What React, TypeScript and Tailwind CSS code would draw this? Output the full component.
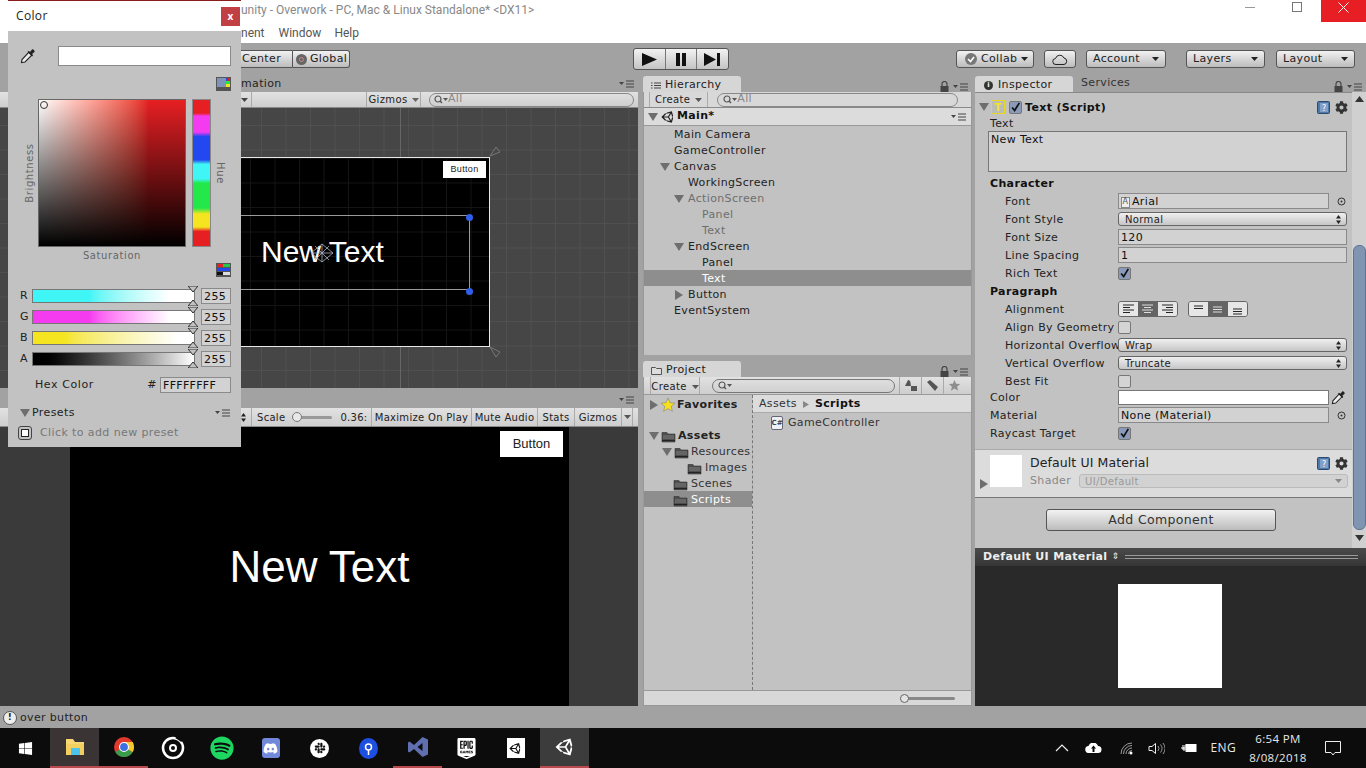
import type { ReactNode } from "react";
import { FaDiscord, FaSlack, FaSpotify, FaUnity, FaWindows, FaCog } from "react-icons/fa";
import { SiEpicgames } from "react-icons/si";

const Tri = ({ dir = "down", className = "" }: { dir?: "down" | "right"; className?: string }) => (
  <svg width="10" height="10" viewBox="0 0 10 10" className={className}>
    <path d={dir === "down" ? "M0 1h10L5 9z" : "M1 0v10l8-5z"} fill="#6e6e6e" />
  </svg>
);

const Arrow = ({ color = "#222" }: { color?: string }) => (
  <svg width="7" height="4" viewBox="0 0 7 4" className="shrink-0">
    <path d="M0 0h7L3.5 4z" fill={color} />
  </svg>
);

const UpDown = () => (
  <svg width="5" height="9" viewBox="0 0 5 9" className="shrink-0">
    <path d="M2.5 0L5 3.5H0zM2.5 9L0 5.5h5z" fill="#222" />
  </svg>
);

const PaneMenu = () => (
  <svg width="16" height="8" viewBox="0 0 16 8">
    <path d="M0 2h5L2.5 5z" fill="#444" />
    <path d="M7 1h8M7 4h8M7 7h8" stroke="#444" strokeWidth="1.2" />
  </svg>
);

const Lock = () => (
  <svg width="9" height="11" viewBox="0 0 9 11">
    <path d="M2 5V3a2.5 2.5 0 015 0v2" fill="none" stroke="#444" strokeWidth="1.2" />
    <rect x="0.5" y="5" width="8" height="6" fill="#444" />
  </svg>
);

const Search = () => (
  <svg width="14" height="9" viewBox="0 0 14 9" className="shrink-0">
    <circle cx="4" cy="4" r="3" fill="none" stroke="#555" strokeWidth="1.2" />
    <path d="M6 6l2 2" stroke="#555" strokeWidth="1.4" />
    <path d="M9 3h5l-2.5 3z" fill="#555" />
  </svg>
);

const Folder = () => (
  <svg width="15" height="13" viewBox="0 0 15 13" className="shrink-0">
    <path d="M1 2.5h5l1 1.500h7v8H1z" fill="#4d4d4d" stroke="#333" strokeWidth="0.6" />
    <path d="M2 6h11M2 8h11" stroke="#8b8b8b" strokeWidth="0.8" />
    <path d="M1 10.500h13" stroke="#222" strokeWidth="1" />
  </svg>
);

const Check = ({ on = true }: { on?: boolean }) => (
  <span className={`flex h-[13px] w-[13px] items-center justify-center rounded-[2px] border border-[#777] ${on ? "bg-[#8a9ab8]" : "bg-[#d4d4d4]"}`}>
    {on && (
      <svg width="13" height="13" viewBox="0 0 13 13">
        <path d="M2.5 6.5l3 3.5 5.5-9" fill="none" stroke="#111" strokeWidth="2" />
      </svg>
    )}
  </span>
);

const HelpBook = () => (
  <svg width="13" height="13" viewBox="0 0 13 13">
    <rect x="0.5" y="0.5" width="12" height="12" rx="1" fill="#4f78a8" stroke="#2c4a70" />
    <rect x="3" y="2" width="8" height="9" fill="#7fa0c8" />
    <text x="5" y="10" fontSize="8" fill="#fff" fontFamily="DejaVu Sans">?</text>
  </svg>
);

const Circle = () => (
  <svg width="9" height="9" viewBox="0 0 9 9">
    <circle cx="4.5" cy="4.5" r="3.5" fill="none" stroke="#333" />
    <circle cx="4.5" cy="4.5" r="1" fill="#333" />
  </svg>
);

const Pipette = ({ size = 16 }: { size?: number }) => (
  <svg width={size} height={size} viewBox="0 0 16 16">
    <path d="M1.5 14.5l.5-3 7-7.500 3 3-7 7z" fill="#eee" stroke="#222" strokeWidth="1.1" />
    <path d="M8.500 3l1.500 1 2-2.500c1-.8 3.300 1.500 2.500 2.500L12 6l1 1.500-1 1-4.500-4.500z" fill="#222" />
  </svg>
);

const Handle = ({ pos, up = false }: { pos: string; up?: boolean }) => (
  <svg width="10" height="6" viewBox="0 0 10 6" className={`absolute right-[-4px] ${pos}`}>
    <path d={up ? "M0 6h10L5 0z" : "M0 0h10L5 6z"} fill="#c2c2c2" stroke="#333" />
  </svg>
);

const Swatches = () => (
  <svg width="15" height="14" viewBox="0 0 15 14">
    <rect width="15" height="14" fill="#555" />
    <rect x="1" y="1" width="9" height="9" fill="#7d93b8" />
    <rect x="10" y="1" width="2" height="3" fill="#2348f0" />
    <rect x="12" y="1" width="2" height="3" fill="#e61f23" />
    <rect x="10" y="4" width="4" height="3" fill="#22e84a" />
    <rect x="10" y="7" width="4" height="3" fill="#f5e520" />
  </svg>
);

const Sliders = () => (
  <svg width="15" height="14" viewBox="0 0 15 14">
    <rect width="15" height="14" fill="#555" />
    <rect x="1" y="1" width="6" height="3" fill="#e61f23" />
    <rect x="7" y="1" width="7" height="3" fill="#22c84a" />
    <rect x="1" y="5" width="13" height="3" fill="#2348f0" />
    <rect x="1" y="9" width="13" height="3" fill="#ddd" />
    <rect x="1" y="9" width="6" height="3" fill="#111" />
  </svg>
);

const toolButton =
  "flex h-[18px] items-center rounded-[3px] border border-[#555] bg-linear-to-b from-[#f2f2f2] to-[#bcbcbc] text-[#222]";
const stripBar = "border-b border-[#8a8a8a] bg-linear-to-b from-[#e2e2e2] to-[#cecece]";
const field = "flex h-[16px] items-center border border-[#8a8a8a] bg-[#d2d2d2] px-[2px] pt-[2px] text-[#111]";
const dropdown =
  "flex h-[14px] w-[229px] items-center justify-between rounded-[3px] border border-[#666] bg-linear-to-b from-[#f0f0f0] to-[#c6c6c6] pl-[6px] pr-[5px] text-[10px] text-[#222]";

const hierarchy = [
  { name: "Main Camera", pad: "pl-[30px]" },
  { name: "GameController", pad: "pl-[30px]" },
  { name: "Canvas", pad: "pl-[30px]", fold: "down" },
  { name: "WorkingScreen", pad: "pl-[44px]" },
  { name: "ActionScreen", pad: "pl-[44px]", fold: "down", dim: true },
  { name: "Panel", pad: "pl-[58px]", dim: true },
  { name: "Text", pad: "pl-[58px]", dim: true },
  { name: "EndScreen", pad: "pl-[44px]", fold: "down" },
  { name: "Panel", pad: "pl-[58px]" },
  { name: "Text", pad: "pl-[58px]", selected: true },
  { name: "Button", pad: "pl-[44px]", fold: "right" },
  { name: "EventSystem", pad: "pl-[30px]" },
];

const colorSliders = [
  { label: "R", bar: "from-[#40f5f5] from-[35%] to-[#fff] to-[85%]" },
  { label: "G", bar: "from-[#f53bf0] from-[35%] to-[#fff] to-[85%]" },
  { label: "B", bar: "from-[#f5e520] from-[20%] to-[#fff] to-[90%]" },
  { label: "A", bar: "from-[#000] to-[#fff]" },
];

const Row = ({ label, sub = true, children }: { label: string; sub?: boolean; children?: ReactNode }) => (
  <div className={`flex h-[18px] items-center text-[#222] ${sub ? "pl-[30px]" : "pl-[15px]"}`}>
    <span className={`whitespace-nowrap pt-[2px] ${sub ? "w-[113px]" : "w-[128px]"}`}>{label}</span>
    {children}
  </div>
);

const AlignIcon = ({ lines }: { lines: string }) => (
  <svg width="13" height="10" viewBox="0 0 13 10">
    <path d={lines} stroke="#222" strokeWidth="1" />
  </svg>
);

function ColorWindow() {
  return (
    <div className="absolute left-[8px] top-0 z-10 flex h-[447px] w-[233px] flex-col bg-[#c2c2c2] text-[#222]">
      <div className="flex h-[31px] shrink-0 items-center justify-between border-t border-[#8c1c1c] bg-white pl-[8px] pr-[1px] text-[12px] [font-family:'Open_Sans',sans-serif]">
        <span>Color</span>
        <span className="flex h-[19px] w-[19px] items-center justify-center bg-[#c04044] text-[10px] font-bold text-white">x</span>
      </div>
      <div className="mt-[15px] flex h-[20px] items-center pl-[12px] pr-[10px]">
        <Pipette />
        <div className="ml-[22px] h-[20px] flex-1 border border-[#8a8a8a] bg-white" />
      </div>
      <div className="mt-[11px] flex h-[14px] justify-end pr-[10px]">
        <Swatches />
      </div>
      <div className="relative mt-[8px] ml-[30px] flex h-[148px]">
        <div className="relative h-[148px] w-[148px] border border-[#666] bg-linear-to-r from-white to-[#e61f23] to-[75%]">
          <div className="absolute inset-0 bg-linear-to-b from-transparent to-black" />
          <div className="absolute left-[1px] top-[1px] h-[8px] w-[8px] rounded-full border border-[#333]" />
        </div>
        <div className="ml-[6px] h-[148px] w-[19px] border border-[#888] bg-[linear-gradient(to_bottom,#e61f23_0_9%,#f53bf0_11%_22%,#2348f0_25%_41%,#40f5f5_44%_54%,#22e84a_57%_74%,#f5e520_78%_87%,#e61f23_90%)]" />
        <span className="absolute left-[-38px] top-[74px] origin-center -translate-y-1/2 -rotate-90 text-[10px] tracking-[0.6px] text-[#666]">Brightness</span>
        <span className="absolute left-[172px] top-[74px] origin-center -translate-y-1/2 rotate-90 text-[10px] tracking-[0.6px] text-[#666]">Hue</span>
      </div>
      <div className="mt-[1px] flex h-[14px] items-center pl-[30px] pr-[10px]">
        <span className="w-[148px] text-center text-[10px] tracking-[0.6px] text-[#666]">Saturation</span>
        <span className="ml-auto mt-[30px]">
          <Sliders />
        </span>
      </div>
      <div className="mt-[26px] flex flex-col gap-[5px] pl-[12px] pr-[10px]">
        {colorSliders.map((s, i) => (
          <div key={s.label} className="flex h-[16px] items-center">
            <span className="w-[12px] text-[11px]">{s.label}</span>
            <div className={`relative h-[14px] flex-1 border border-[#777] bg-linear-to-r ${s.bar}`}>
              <Handle pos="top-[-4px]" />
              {i < 3 ? <Handle pos="bottom-[-4px]" up /> : <Handle pos="bottom-[-3px]" up />}
            </div>
            <span className={`${field} ml-[6px] w-[30px] text-[11px] tracking-[0.4px]`}>255</span>
          </div>
        ))}
      </div>
      <div className="mt-[9px] flex h-[18px] items-center pl-[27px] pr-[10px] text-[11px] tracking-[0.6px]">
        <span>Hex Color</span>
        <span className="ml-auto mr-[3px] text-[#222]">#</span>
        <span className={`${field} w-[71px] tracking-[0.3px]`}>FFFFFFFF</span>
      </div>
      <div className="mt-[11px] flex h-[16px] items-center pl-[12px] pr-[10px] tracking-[0.4px]">
        <Tri />
        <span className="ml-[2px]">Presets</span>
        <span className="ml-auto">
          <PaneMenu />
        </span>
      </div>
      <div className="mt-[4px] flex h-[16px] items-center pl-[10px] tracking-[0.4px] text-[#777]">
        <span className="flex h-[14px] w-[14px] items-center justify-center rounded-[3px] border border-[#444]">
          <span className="h-[8px] w-[8px] border border-[#222] bg-white" />
        </span>
        <span className="ml-[8px]">Click to add new preset</span>
      </div>
    </div>
  );
}

function SceneView() {
  return (
    <div className="relative h-[280px] overflow-hidden bg-[#464646] bg-[linear-gradient(#505050_1px,transparent_1px),linear-gradient(90deg,#505050_1px,transparent_1px)] [background-size:24.5px_24.5px] [background-position:16px_17px]">
      <div className="absolute bottom-0 left-[400px] top-0 w-px bg-[#666]" />
      <div className="absolute left-[200px] top-[49px] h-[190px] w-[290px] border border-[#e8e8e8] bg-black bg-[linear-gradient(#141414_1px,transparent_1px),linear-gradient(90deg,#141414_1px,transparent_1px)] [background-size:24.5px_24.5px]">
        <div className="absolute left-[242px] top-[3px] flex h-[17px] w-[43px] items-center justify-center bg-white text-[9px] text-[#222] [font-family:'Liberation_Sans',sans-serif]">
          Button
        </div>
        <div className="absolute left-0 top-[57px] h-[75px] w-[269px] border border-[#9a9a9a]" />
        <span className="absolute left-[60px] top-[74px] whitespace-nowrap text-[30px] leading-[40px] tracking-normal text-white [font-family:'Liberation_Sans',sans-serif]">New Text</span>
        <svg width="28" height="24" viewBox="0 0 28 24" className="absolute left-[107px] top-[83px]">
          <path d="M3 12L14 3l11 9-11 9zM14 3v18M3 12h22M7 5l14 14M21 5L7 19" fill="none" stroke="#a8b0c0" strokeWidth="0.8" />
        </svg>
        <span className="absolute left-[265px] top-[56px] h-[7px] w-[7px] rounded-full bg-[#2f5fe8]" />
        <span className="absolute left-[265px] top-[130px] h-[7px] w-[7px] rounded-full bg-[#2f5fe8]" />
      </div>
      <svg width="12" height="12" viewBox="0 0 12 12" className="absolute left-[489px] top-[38px]">
        <path d="M1 10L7 1l4 5z" fill="none" stroke="#777" />
      </svg>
      <svg width="12" height="12" viewBox="0 0 12 12" className="absolute left-[489px] top-[238px]">
        <path d="M1 1l6 10 4-5z" fill="none" stroke="#777" />
      </svg>
    </div>
  );
}

function GameView() {
  return (
    <div className="flex h-[279px] bg-[#3a3a3a]">
      <div className="w-[70px]" />
      <div className="relative flex flex-1 items-center justify-center bg-black">
        <span className="text-[44px] tracking-normal text-white [font-family:'Liberation_Sans',sans-serif]">New Text</span>
        <div className="absolute right-[6px] top-[4px] flex h-[26px] w-[63px] items-center justify-center bg-white text-[13px] tracking-normal text-[#222] [font-family:'Liberation_Sans',sans-serif]">
          Button
        </div>
      </div>
      <div className="w-[69px]" />
    </div>
  );
}

function Hierarchy() {
  return (
    <div className="flex h-[263px] flex-col">
      <div className="flex h-[16px] items-center border-x border-b border-[#999] border-b-[#8a8a8a] bg-[#d8d8d8] pl-[5px] pr-[13px]">
        <span className="flex items-center gap-[5px] border-x border-[#aaa] px-[5px] text-[10px] text-[#222]">
          Create <Arrow color="#555" />
        </span>
        <span className="ml-[9px] flex h-[14px] flex-1 items-center rounded-full border border-[#888] pl-[5px] text-[11px] text-[#888]">
          <Search />
          All
        </span>
      </div>
      <div className="flex h-[18px] items-center border-x border-b border-[#999] bg-[#dcdcdc] pl-[4px] pr-[4px] font-bold text-[#111]">
        <Tri />
        <FaUnity className="ml-[3px] mr-[2px] text-[14px] text-[#222]" />
        Main*
        <span className="ml-auto">
          <PaneMenu />
        </span>
      </div>
      <div className="flex-1 border-x border-[#999] bg-[#c2c2c2]">
        {hierarchy.map((r, i) => (
          <div
            key={i}
            className={`flex h-[16px] items-center pt-[2px] ${r.pad} ${r.selected ? "bg-[#8e8e8e] text-white" : r.dim ? "text-[#6e6e6e]" : "text-[#222]"}`}
          >
            {r.fold && (
              <span className="-ml-[14px] mr-[4px] flex w-[10px]">
                <Tri dir={r.fold as "down" | "right"} />
              </span>
            )}
            {r.name}
          </div>
        ))}
      </div>
    </div>
  );
}

function ProjectTree() {
  return (
    <div className="w-[109px] shrink-0 border-r border-dashed border-[#777] pt-[1px] text-[#222]">
      <div className="flex h-[16px] items-center gap-[2px] pl-[5px] pt-[2px] font-bold">
        <Tri dir="right" />
        <svg width="14" height="14" viewBox="0 0 14 14">
          <path d="M7 0l2 4.700 5 .4-3.800 3.200 1.200 5L7 10.600 2.600 13.300l1.200-5L0 5.100l5-.4z" fill="#f7e020" stroke="#777" strokeWidth="0.5" />
        </svg>
        Favorites
      </div>
      <div className="mt-[15px] flex h-[16px] items-center gap-[2px] pl-[5px] pt-[2px] font-bold">
        <Tri />
        <Folder />
        Assets
      </div>
      <div className="flex h-[16px] items-center gap-[2px] pl-[18px] pt-[2px] text-[#333]">
        <Tri />
        <Folder />
        Resources
      </div>
      <div className="flex h-[16px] items-center gap-[3px] pl-[43px] pt-[2px] text-[#333]">
        <Folder />
        Images
      </div>
      <div className="flex h-[16px] items-center gap-[3px] pl-[29px] pt-[2px] text-[#333]">
        <Folder />
        Scenes
      </div>
      <div className="flex h-[16px] items-center gap-[3px] bg-[#8e8e8e] pl-[29px] pt-[2px] text-white">
        <Folder />
        Scripts
      </div>
    </div>
  );
}

function Project() {
  return (
    <div className="flex flex-1 flex-col">
      <div className={`flex h-[18px] items-center border-x border-[#999] pl-[6px] pr-[6px] ${stripBar}`}>
        <span className="flex w-[50px] items-center justify-center gap-[5px] border-x border-[#aaa] pt-[2px] text-[10px] text-[#222]">
          Create <Arrow color="#555" />
        </span>
        <span className="ml-[12px] flex h-[14px] w-[183px] items-center rounded-full border border-[#777] pl-[5px]">
          <Search />
        </span>
        <span className="ml-auto flex h-full items-center">
          {["user", "tag", "star"].map((k) => (
            <span key={k} className="flex h-full w-[22px] items-center justify-center border-l border-[#aaa]">
              <svg width="13" height="13" viewBox="0 0 13 13">
                {k === "user" && <path d="M4 1a2.5 2.5 0 012.5 3L7 7H1zM7 7h6v5H7z" fill="#555" />}
                {k === "tag" && <path d="M1 3l3-2 8 7-3 4z" fill="#555" />}
                {k === "star" && <path d="M6.5 1l1.6 3.8 4 .3-3 2.6 1 4-3.600-2.200L2.900 11.700l1-4-3-2.600 4-.3z" fill="#8e8e8e" />}
              </svg>
            </span>
          ))}
        </span>
      </div>
      <div className="flex flex-1 border-x border-[#999] bg-[#c2c2c2]">
        <ProjectTree />
        <div className="flex flex-1 flex-col">
          <div className="flex h-[18px] items-center gap-[6px] border-b border-[#aaa] bg-[#dcdcdc] pl-[6px] pt-[2px] text-[#333]">
            Assets
            <svg width="6" height="7" viewBox="0 0 6 7">
              <path d="M0 0l6 3.5L0 7z" fill="#888" />
            </svg>
            <span className="font-bold text-[#111]">Scripts</span>
          </div>
          <div className="flex h-[18px] items-center gap-[5px] pl-[18px] pt-[2px] text-[#333]">
            <span className="flex h-[14px] w-[12px] items-center justify-center rounded-[2px] border border-[#667] bg-[#eef0f4] text-[7px] font-bold tracking-normal text-[#345]">C#</span>
            GameController
          </div>
        </div>
      </div>
      <div className="flex h-[16px] items-center justify-end border border-[#999] bg-[#d8d8d8] pr-[16px]">
        <div className="relative h-[3px] w-[55px] rounded-full bg-[#888]">
          <span className="absolute left-0 top-[-3px] h-[9px] w-[9px] rounded-full border border-[#666] bg-[#e4e4e4]" />
        </div>
      </div>
    </div>
  );
}

function Inspector() {
  return (
    <div className="flex flex-1 bg-[#c2c2c2]">
      <div className="flex w-[377px] flex-col">
        <div className="h-[6px] border-t border-[#888] bg-[#c2c2c2]" />
        <div className="flex h-[18px] items-center pl-[4px] pr-[4px]">
          <Tri />
          <span className="ml-[2px] flex h-[14px] w-[14px] items-center justify-center border border-[#e8d820] bg-[#bbb] text-[10px] font-bold text-[#f5e520]">T</span>
          <span className="ml-[4px] mr-[3px]">
            <Check />
          </span>
          <span className="pt-[2px] font-bold text-[#111]">Text (Script)</span>
          <span className="ml-auto flex items-center gap-[5px]">
            <HelpBook />
            <FaCog className="text-[13px] text-[#333]" />
          </span>
        </div>
        <div className="flex h-[15px] items-center pl-[15px] pt-[2px] text-[#222]">Text</div>
        <div className="ml-[13px] h-[41px] w-[359px] border border-[#777] bg-[#d2d2d2] px-[2px] text-[#111]">New Text</div>
        <div className="mt-[2px] flex h-[18px] items-center pl-[15px] pt-[2px] font-bold text-[#111]">Character</div>
        <Row label="Font">
          <span className={`${field} w-[211px]`}>
            <span className="mr-[2px] flex h-[11px] w-[9px] items-center justify-center border border-[#888] bg-[#eee] text-[8px] text-[#555]">A</span>
            Arial
          </span>
          <span className="ml-[8px]">
            <Circle />
          </span>
        </Row>
        <Row label="Font Style">
          <span className={dropdown}>
            Normal <UpDown />
          </span>
        </Row>
        <Row label="Font Size">
          <span className={`${field} w-[229px]`}>120</span>
        </Row>
        <Row label="Line Spacing">
          <span className={`${field} w-[229px]`}>1</span>
        </Row>
        <Row label="Rich Text">
          <Check />
        </Row>
        <div className="flex h-[18px] items-center pl-[15px] pt-[2px] font-bold text-[#111]">Paragraph</div>
        <Row label="Alignment">
          <span className="flex h-[16px] w-[60px] overflow-hidden rounded-[3px] border border-[#666]">
            <span className="flex flex-1 items-center justify-center bg-[#e6e6e6]">
              <AlignIcon lines="M1 1h11M1 3.5h7M1 6h11M1 8.5h7" />
            </span>
            <span className="flex flex-1 items-center justify-center bg-[#646464]">
              <svg width="13" height="10" viewBox="0 0 13 10">
                <path d="M1 1h11M3 3.5h7M1 6h11M3 8.5h7" stroke="#ddd" />
              </svg>
            </span>
            <span className="flex flex-1 items-center justify-center bg-[#e6e6e6]">
              <AlignIcon lines="M1 1h11M5 3.5h7M1 6h11M5 8.5h7" />
            </span>
          </span>
          <span className="ml-[10px] flex h-[16px] w-[60px] overflow-hidden rounded-[3px] border border-[#666]">
            <span className="flex flex-1 items-start justify-center bg-[#e6e6e6] pt-[3px]">
              <AlignIcon lines="M2 1h9M2 3.5h9" />
            </span>
            <span className="flex flex-1 items-center justify-center bg-[#646464]">
              <svg width="13" height="7" viewBox="0 0 13 7">
                <path d="M2 1h9M2 3.5h9M2 6h9" stroke="#ddd" />
              </svg>
            </span>
            <span className="flex flex-1 items-end justify-center bg-[#e6e6e6] pb-[1px]">
              <AlignIcon lines="M2 4h9M2 6.5h9M2 9h9" />
            </span>
          </span>
        </Row>
        <Row label="Align By Geometry">
          <Check on={false} />
        </Row>
        <Row label="Horizontal Overflow">
          <span className={dropdown}>
            Wrap <UpDown />
          </span>
        </Row>
        <Row label="Vertical Overflow">
          <span className={dropdown}>
            Truncate <UpDown />
          </span>
        </Row>
        <Row label="Best Fit">
          <Check on={false} />
        </Row>
        <div className="-mt-[1px] flex h-[16px] items-center pl-[15px] text-[#222]">
          <span className="w-[128px] pt-[2px]">Color</span>
          <span className="h-[15px] w-[211px] border border-[#777] bg-white" />
          <span className="ml-[2px]">
            <Pipette size={15} />
          </span>
        </div>
        <div className="mt-[1px]">
          <Row label="Material" sub={false}>
            <span className={`${field} w-[211px]`}>None (Material)</span>
            <span className="ml-[8px]">
              <Circle />
            </span>
          </Row>
        </div>
        <Row label="Raycast Target" sub={false}>
          <Check />
        </Row>
        <div className="relative mt-[7px] flex h-[49px] items-start border-y border-[#aaa] border-b-[#777] bg-[#dcdcdc] pl-[15px] pr-[4px] pt-[5px]">
          <span className="absolute bottom-[8px] left-[4px]">
            <Tri dir="right" />
          </span>
          <span className="h-[32px] w-[32px] bg-white" />
          <div className="ml-[8px] flex flex-1 flex-col">
            <div className="flex h-[16px] items-center text-[12.5px] tracking-[0.1px] text-[#222]">
              Default UI Material
              <span className="ml-auto flex items-center gap-[5px]">
                <HelpBook />
                <FaCog className="text-[13px] text-[#333]" />
              </span>
            </div>
            <div className="mt-[3px] flex h-[14px] items-center text-[#888]">
              Shader
              <span className="ml-[8px] flex h-[14px] flex-1 items-center justify-between rounded-[3px] border border-[#bbb] bg-[#d2d2d2] px-[5px] text-[10px] text-[#999]">
                UI/Default <Arrow color="#888" />
              </span>
            </div>
          </div>
        </div>
        <div className="flex flex-1 justify-center pr-[5px] pt-[11px]">
          <span className={`${toolButton} h-[22px] w-[230px] justify-center text-[12.5px] text-[#333]`}>Add Component</span>
        </div>
      </div>
      <div className="flex w-[14px] flex-col items-center bg-[#d0d0d0]">
        <svg width="9" height="6" viewBox="0 0 9 6" className="mt-[4px]">
          <path d="M4.5 0L9 6H0z" fill="#333" />
        </svg>
        <div className="mt-[143px] h-[285px] w-[13px] rounded-[6px] border border-[#5f7390] bg-[#8095b2]" />
        <svg width="9" height="6" viewBox="0 0 9 6" className="mt-[5px]">
          <path d="M0 0h9L4.5 6z" fill="#333" />
        </svg>
      </div>
    </div>
  );
}

function Chrome() {
  return (
    <svg width="20" height="20" viewBox="0 0 20 20">
      <circle cx="10" cy="10" r="10" fill="#e3382d" />
      <path d="M10 10L1.3 15A10 10 0 0010 20a10 10 0 008.7-5z" fill="#3a9b4a" />
      <path d="M10 10l8.7 5A10 10 0 0020 10a10 10 0 00-1.300-5H10z" fill="#f5c92a" />
      <circle cx="10" cy="10" r="4.5" fill="#3d6fe0" stroke="#fff" strokeWidth="1.2" />
    </svg>
  );
}

const iconSlot = "flex h-[40px] w-[49px] shrink-0 items-center justify-center";
const underline = "border-b-2 border-[#b84a4e]";

function Taskbar() {
  return (
    <div className="flex h-[40px] shrink-0 items-center bg-[#0c0c0c] text-white">
      <div className={`${iconSlot} w-[50px]`}>
        <FaWindows className="text-[15px]" />
      </div>
      <div className={`${iconSlot} bg-[#3a3434] ${underline}`}>
        <svg width="20" height="18" viewBox="0 0 20 18">
          <path d="M1 1h7l2 3h9v13H1z" fill="#f7d774" />
          <path d="M1 6h18v11H1z" fill="#f3cf5f" />
          <rect x="6" y="10" width="9" height="7" fill="#4cc4ec" />
        </svg>
      </div>
      <div className={`${iconSlot} ${underline}`}>
        <Chrome />
      </div>
      <div className={iconSlot}>
        <svg width="24" height="24" viewBox="0 0 24 24">
          <circle cx="12" cy="12" r="10" fill="none" stroke="#fff" strokeWidth="2.5" />
          <circle cx="12" cy="12" r="3" fill="none" stroke="#fff" strokeWidth="2" />
          <path d="M15 1l6 4" stroke="#0c0c0c" strokeWidth="2.5" />
        </svg>
      </div>
      <div className={iconSlot}>
        <FaSpotify className="text-[24px] text-[#1ed760]" />
      </div>
      <div className={iconSlot}>
        <span className="flex h-[20px] w-[18px] items-center justify-center rounded-[3px] bg-[#7289da]">
          <FaDiscord className="text-[15px] text-white" />
        </span>
      </div>
      <div className={iconSlot}>
        <span className="flex h-[19px] w-[19px] items-center justify-center rounded-full bg-white">
          <FaSlack className="text-[12px] text-[#111]" />
        </span>
      </div>
      <div className={iconSlot}>
        <svg width="19" height="21" viewBox="0 0 19 21">
          <ellipse cx="9.5" cy="10.5" rx="9.5" ry="10.5" fill="#1d4fe0" />
          <circle cx="9.5" cy="9" r="3" fill="none" stroke="#fff" strokeWidth="1.5" />
          <path d="M9.5 12v5" stroke="#fff" strokeWidth="1.5" />
        </svg>
      </div>
      <div className={`${iconSlot} ${underline}`}>
        <svg width="22" height="22" viewBox="0 0 22 22">
          <path d="M15.5 1L21 3.5v15L15.5 21 7 13l-4.500 3.500L1 15.500v-9L2.500 5.500 7 9zM15.500 7L10.500 11l5 4z" fill="#5f6fb0" />
        </svg>
      </div>
      <div className={iconSlot}>
        <SiEpicgames className="text-[21px] text-white" />
      </div>
      <div className={iconSlot}>
        <span className="flex h-[20px] w-[18px] items-center justify-center bg-white">
          <FaUnity className="text-[13px] text-[#111]" />
        </span>
      </div>
      <div className={`${iconSlot} bg-[#3c3c3c] ${underline}`}>
        <FaUnity className="text-[20px] text-white" />
      </div>
      <div className="ml-auto flex h-full items-center [font-family:'Open_Sans',sans-serif]">
        <svg width="14" height="8" viewBox="0 0 14 8" className="mr-[16px]">
          <path d="M1 7l6-6 6 6" fill="none" stroke="#eee" strokeWidth="1.2" />
        </svg>
        <svg width="17" height="10" viewBox="0 0 17 10" className="mr-[18px]">
          <path d="M4 10a3.5 3.5 0 01-.5-7A5 5 0 0113 3a3.5 3.5 0 010 7z" fill="#fff" />
          <path d="M8.5 2.5L11 5.5H9.5V9h-2V5.5H6z" fill="#0c0c0c" />
        </svg>
        <svg width="13" height="13" viewBox="0 0 13 13" className="mr-[15px]">
          <path d="M1 12a11 11 0 0111-11M3.5 12A8.5 8.5 0 0112 3.5M6 12a6 6 0 016-6M8.500 12A3.500 3.500 0 0112 8.500" fill="none" stroke="#aaa" strokeWidth="0.9" />
          <circle cx="11" cy="11" r="1.5" fill="#fff" />
        </svg>
        <svg width="17" height="13" viewBox="0 0 17 13" className="mr-[16px]">
          <path d="M1 4.5h3L7.500 1.500v10L4 8.500H1z" fill="none" stroke="#eee" />
          <path d="M10 4a4 4 0 010 5M12.500 2.500a6.500 6.500 0 010 8M15 1a9 9 0 010 11" fill="none" stroke="#999" />
        </svg>
        <svg width="16" height="10" viewBox="0 0 16 10" className="mr-[14px]">
          <path d="M0 5h3M2 2v3M4 2v3M2 5h2v2H2z" stroke="#fff" fill="none" />
          <rect x="5" y="1.5" width="10" height="7" fill="#fff" stroke="#fff" />
        </svg>
        <span className="mr-[12px] text-[12px] text-[#e8e8e8]">ENG</span>
        <div className="flex w-[60px] flex-col items-center text-[11.5px] leading-[19px] text-[#e8e8e8]">
          <span className="whitespace-nowrap">6:54 PM</span>
          <span className="whitespace-nowrap">8/08/2018</span>
        </div>
        <svg width="16" height="15" viewBox="0 0 16 15" className="ml-[17px] mr-[25px]">
          <path d="M.5.5h15v11H10l-2 2.500-2-2.500H.5z" fill="none" stroke="#eee" />
        </svg>
      </div>
    </div>
  );
}

const TabCorner = () => (
  <span className="ml-auto mt-[4px] flex items-center gap-[4px]">
    <Lock />
    <PaneMenu />
  </span>
);

export default function App() {
  return (
    <div className="relative flex h-[768px] w-[1366px] flex-col overflow-hidden bg-[#a2a2a2] text-[11px] tracking-[0.35px] [font-family:'DejaVu_Sans',sans-serif]">
      <ColorWindow />

      {/* title + menu */}
      <div className="flex h-[22px] shrink-0 items-start bg-white pl-[241px] text-[12px] tracking-normal text-[#888] [font-family:'Roboto',sans-serif]">
        <span className="pt-[1px]">unity - Overwork - PC, Mac &amp; Linux Standalone* &lt;DX11&gt;</span>
        <span className="ml-auto flex h-full items-start">
          <span className="mt-[7px] h-px w-[10px] bg-[#999]" />
          <span className="ml-[37px] mt-[2px] h-[10px] w-[10px] border border-[#777]" />
          <span className="ml-[19px] flex h-full w-[45px] justify-center bg-[#e81e25] pt-[2px]">
            <svg width="11" height="11" viewBox="0 0 11 11">
              <path d="M.5.5l10 10M10.500.5l-10 10" stroke="#fff" />
            </svg>
          </span>
        </span>
      </div>
      <div className="flex h-[21px] shrink-0 items-center bg-white pl-[241px] text-[12px] tracking-normal text-[#555] [font-family:'Roboto',sans-serif]">
        <span>nent</span>
        <span className="ml-[14px]">Window</span>
        <span className="ml-[13px]">Help</span>
      </div>

      {/* toolbar */}
      <div className="flex h-[29px] shrink-0 items-center pt-[3px] text-[#222]">
        <span className="w-[225px]" />
        <span className={`${toolButton} w-[68px] justify-end rounded-r-none pr-[11px]`}>Center</span>
        <span className={`${toolButton} w-[57px] gap-[3px] rounded-l-none border-l-0 pl-[3px]`}>
          <span className="flex h-[11px] w-[11px] items-center justify-center rounded-full bg-[#666]">
            <span className="h-[5px] w-[5px] rounded-full border border-[#c88]" />
          </span>
          Global
        </span>
        <span className="w-[283px]" />
        <span className="flex h-[22px] w-[96px] overflow-hidden rounded-[3px] border border-[#555] bg-linear-to-b from-[#f2f2f2] to-[#c4c4c4]">
          <span className="flex flex-1 items-center justify-center border-r border-[#777]">
            <svg width="15" height="13" viewBox="0 0 15 13">
              <path d="M0 0l15 6.5L0 13z" fill="#111" />
            </svg>
          </span>
          <span className="flex flex-1 items-center justify-center border-r border-[#777]">
            <svg width="10" height="13" viewBox="0 0 10 13">
              <path d="M0 0h4v13H0zM6 0h4v13H6z" fill="#111" />
            </svg>
          </span>
          <span className="flex flex-1 items-center justify-center">
            <svg width="17" height="13" viewBox="0 0 17 13">
              <path d="M0 0l12 6.5L0 13zM13 0h3v13h-3z" fill="#111" />
            </svg>
          </span>
        </span>
        <span className="w-[227px]" />
        <span className={`${toolButton} w-[78px] gap-[4px] pl-[8px]`}>
          <svg width="12" height="12" viewBox="0 0 12 12">
            <circle cx="6" cy="6" r="6" fill="#777" />
            <path d="M3 6l2.5 2.5L9 4" fill="none" stroke="#fff" strokeWidth="1.6" />
          </svg>
          Collab
          <Arrow />
        </span>
        <span className={`${toolButton} ml-[10px] w-[32px] justify-center`}>
          <svg width="16" height="11" viewBox="0 0 16 11">
            <path d="M4 10.5a3 3 0 01-.5-6A4.500 4.500 0 0112 4a3.300 3.300 0 010 6.500z" fill="none" stroke="#222" />
          </svg>
        </span>
        <span className={`${toolButton} ml-[10px] w-[80px] justify-between px-[6px]`}>
          Account <Arrow />
        </span>
        <span className={`${toolButton} ml-[20px] w-[79px] justify-between px-[6px]`}>
          Layers <Arrow />
        </span>
        <span className={`${toolButton} ml-[11px] w-[79px] justify-between px-[6px]`}>
          Layout <Arrow />
        </span>
      </div>

      {/* panels */}
      <div className="flex h-[634px] shrink-0">
        <div className="flex w-[638px] shrink-0 flex-col">
          <div className="flex h-[20px] items-center pl-[241px] pt-[4px] text-[#222]">
            <span>mation</span>
            <span className="ml-auto pr-[3px]">
              <PaneMenu />
            </span>
          </div>
          <div className={`flex h-[16px] items-center pl-[241px] ${stripBar}`}>
            <Arrow color="#444" />
            <span className="ml-[3px] h-full border-l border-[#aaa]" />
            <span className="ml-auto flex h-full w-[55px] items-center justify-center gap-[4px] border-x border-[#aaa] text-[10px] tracking-[0.4px] text-[#222]">
              Gizmos <Arrow color="#666" />
            </span>
            <span className="ml-[8px] mr-[4px] flex h-[14px] w-[205px] items-center rounded-full border border-[#888] pl-[4px] text-[#888]">
              <Search />
              All
            </span>
          </div>
          <SceneView />
          <div className="flex h-[20px] items-center justify-end pr-[3px] pt-[4px]">
            <PaneMenu />
          </div>
          <div className={`flex h-[19px] items-center pl-[241px] text-[10px] tracking-[0.3px] text-[#222] ${stripBar}`}>
            <UpDown />
            <span className="ml-[5px] flex h-full w-[121px] items-center border-x border-[#aaa] pl-[5px]">
              Scale
              <span className="relative ml-[7px] h-[3px] w-[40px] rounded-full bg-[#999]">
                <span className="absolute left-0 top-[-4px] h-[10px] w-[10px] rounded-full border border-[#777] bg-[#e8e8e8]" />
              </span>
              <span className="ml-[8px]">0.36:</span>
            </span>
            <span className="flex h-full w-[100px] items-center justify-center border-r border-[#aaa]">Maximize On Play</span>
            <span className="flex h-full w-[66px] items-center justify-center border-r border-[#aaa]">Mute Audio</span>
            <span className="flex h-full w-[37px] items-center justify-center border-r border-[#aaa]">Stats</span>
            <span className="flex h-full w-[47px] items-center justify-center border-r border-[#aaa]">Gizmos</span>
            <span className="flex h-full w-[11px] items-center justify-center border-r border-[#aaa]">
              <Arrow color="#555" />
            </span>
          </div>
          <GameView />
        </div>

        <div className="ml-[5px] flex w-[329px] shrink-0 flex-col">
          <div className="flex h-[20px] items-end pr-[3px]">
            <span className="flex h-[16px] w-[98px] items-center gap-[4px] rounded-t-[3px] bg-[#d6d6d6] pl-[8px] pt-[2px] text-[#222]">
              <svg width="10" height="7" viewBox="0 0 10 7">
                <path d="M3 1h7M3 3.5h7M3 6h7M0 1h1.5M0 3.5h1.5M0 6h1.5" stroke="#444" />
              </svg>
              Hierarchy
            </span>
            <TabCorner />
          </div>
          <Hierarchy />
          <div className="mt-[2px] flex h-[20px] items-end pr-[3px]">
            <span className="flex h-[16px] w-[98px] items-center gap-[4px] rounded-t-[3px] bg-[#d6d6d6] pl-[8px] pt-[2px] text-[#222]">
              <svg width="11" height="9" viewBox="0 0 11 9">
                <path d="M.5 1.5h4l1 1h5v6H.5z" fill="#ddd" stroke="#555" />
              </svg>
              Project
            </span>
            <TabCorner />
          </div>
          <Project />
        </div>

        <div className="ml-[3px] flex w-[391px] shrink-0 flex-col">
          <div className="flex h-[20px] items-end pr-[3px]">
            <span className="flex h-[16px] w-[98px] items-center gap-[5px] rounded-t-[3px] bg-[#d6d6d6] pl-[9px] pt-[2px] text-[#222]">
              <span className="flex h-[9px] w-[9px] items-center justify-center rounded-full bg-[#333] text-[7px] font-bold text-white">i</span>
              Inspector
            </span>
            <span className="ml-[8px] pb-[1px] text-[#333]">Services</span>
            <TabCorner />
          </div>
          <Inspector />
          <div className="flex h-[18px] shrink-0 items-center bg-linear-to-b from-[#4a4a4a] to-[#363636] pl-[8px] text-[#eee]">
            <span className="font-bold">Default UI Material</span>
            <span className="mx-[4px] text-[9px]">⇕</span>
            <span className="ml-[2px] mr-[8px] h-[4px] flex-1 border-y border-[#9a9a9a]" />
          </div>
          <div className="flex h-[140px] shrink-0 items-center justify-center bg-[#292929] pr-[1px]">
            <div className="h-[104px] w-[104px] bg-white" />
          </div>
        </div>
      </div>

      {/* status */}
      <div className="flex h-[22px] shrink-0 items-center pl-[3px] pt-[2px] text-[#222]">
        <span className="mr-[3px] flex h-[14px] w-[14px] items-center justify-center rounded-full border border-[#555] bg-[#eee] text-[9px] font-bold">!</span>
        over button
      </div>

      <Taskbar />
    </div>
  );
}
